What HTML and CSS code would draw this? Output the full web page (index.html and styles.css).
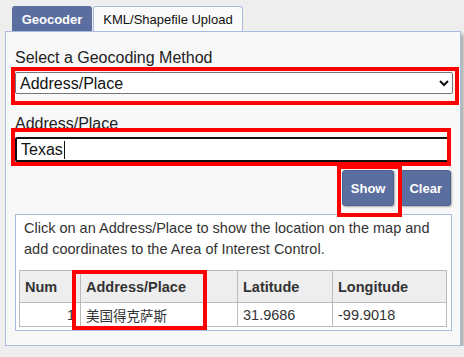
FILE: index.html
```html
<!DOCTYPE html>
<html lang="en">

<head>
    <meta charset="utf-8">
    <title>Geocoder</title>
    <meta name="viewport" content="width=device-width, initial-scale=1">
    <link rel="stylesheet" href="styles.css">
</head>

<body>
    <div class="geocoder">
        <div class="tabs">
            <div class="tab tab-active">Geocoder</div>
            <div class="tab">KML/Shapefile Upload</div>
        </div>

        <div class="panel">
            <label class="field-label" for="method">Select a Geocoding Method</label>
            <select id="method" class="method-select">
                <option>Address/Place</option>
            </select>

            <label class="field-label">Address/Place</label>
            <div class="search-box">Texas<span class="caret"></span></div>

            <div class="actions">
                <button class="btn">Show</button>
                <button class="btn">Clear</button>
            </div>

            <div class="results">
                <p class="hint">Click on an Address/Place to show the location on the map and add coordinates to the Area of Interest Control.</p>
                <table class="result-table">
                    <thead>
                        <tr>
                            <th class="col-num">Num</th>
                            <th class="col-place">Address/Place</th>
                            <th class="col-lat">Latitude</th>
                            <th class="col-lon">Longitude</th>
                        </tr>
                    </thead>
                    <tbody>
                        <tr>
                            <td class="num">1</td>
                            <td class="cjk">美国得克萨斯</td>
                            <td>31.9686</td>
                            <td>-99.9018</td>
                        </tr>
                    </tbody>
                </table>
            </div>

            <!-- annotation boxes -->
            <div class="mark mark-select"></div>
            <div class="mark mark-input"></div>
            <div class="mark mark-show"></div>
            <div class="mark mark-column"></div>
        </div>
    </div>
</body>

</html>
```

FILE: styles.css
```css
body {
    margin: 0;
    background-color: #eeeeee;
    font-family: 'Liberation Sans', Arial, sans-serif;
    color: #222;
}

.geocoder {
    padding: 6px 0 0 5px;
}

.tabs {
    display: flex;
    gap: 1px;
    padding-left: 7px;
}

.tab {
    box-sizing: border-box;
    height: 25px;
    width: 150px;
    display: flex;
    align-items: center;
    justify-content: center;
    font-size: 13px;
    color: #111;
    background-color: #fafafa;
    border: 1px solid #a9bce0;
    border-bottom: none;
    border-radius: 3px 3px 0 0;
}

.tab-active {
    width: 80px;
    background-color: #5a6e9f;
    border-color: #5a6e9f;
    color: #fff;
    font-weight: bold;
}

.panel {
    position: relative;
    width: 437px;
    padding: 17px 8px 14px 9px;
    background-color: #f8f8f8;
    border: 1px solid #a9bce0;
    box-shadow: 3px 3px 3px rgba(0, 0, 0, 0.25);
}

.field-label {
    display: block;
    font-size: 16px;
    line-height: 18px;
    margin-bottom: 5px;
}

.method-select {
    display: block;
    box-sizing: border-box;
    width: 438px;
    height: 22px;
    margin: 0 0 21px 0;
    font-family: 'Liberation Sans', Arial, sans-serif;
    font-size: 16px;
    color: #111;
    background-color: #fff;
    border: 1px solid #767676;
    border-radius: 2px;
}

.search-box {
    box-sizing: border-box;
    width: 434px;
    height: 25px;
    margin-top: -1px;
    padding: 0 4px;
    display: flex;
    align-items: center;
    font-size: 16px;
    color: #111;
    background-color: #fff;
    border: 2px solid #111;
    border-radius: 2px;
}

.caret {
    display: inline-block;
    width: 1px;
    height: 18px;
    margin-left: 1px;
    background-color: #111;
}

.actions {
    display: flex;
    justify-content: flex-end;
    gap: 6px;
    margin: 8px 0;
    padding-right: 1px;
}

.btn {
    box-sizing: border-box;
    height: 36px;
    padding: 0 8px;
    font-family: 'Liberation Sans', Arial, sans-serif;
    font-size: 13px;
    font-weight: bold;
    color: #fff;
    background-color: #5a6e9f;
    border: 1px solid #4d6090;
    border-radius: 3px;
    box-shadow: 1px 1px 2px rgba(0, 0, 0, 0.3);
}

.results {
    padding: 3px;
    background-color: #fff;
    border: 1px solid #a9bce0;
}

.hint {
    margin: 0 0 10px 0;
    padding: 0 4px 0 5px;
    font-size: 14.5px;
    line-height: 21px;
    color: #333;
}

.result-table {
    width: 428px;
    border-collapse: collapse;
    font-size: 14.5px;
    color: #333;
}

.result-table th,
.result-table td {
    border: 1px solid #bbbbbb;
    padding: 0 5px;
    text-align: left;
}

.result-table th {
    height: 31px;
    background-color: #eeeeee;
    font-weight: bold;
}

.result-table td {
    height: 23px;
}

.result-table td.num {
    text-align: right;
}

.result-table td.cjk {
    font-family: 'Noto Sans CJK SC', sans-serif;
    font-size: 13.5px;
}

.col-num {
    width: 50px;
}

.col-place {
    width: 146px;
}

.col-lat {
    width: 84px;
}

.mark {
    position: absolute;
    box-sizing: border-box;
    border: 4px solid #ff0000;
}

.mark-select {
    left: 5px;
    top: 35px;
    width: 448px;
    height: 38px;
}

.mark-input {
    left: 5px;
    top: 96px;
    width: 440px;
    height: 38px;
}

.mark-show {
    left: 331px;
    top: 133px;
    width: 65px;
    height: 52px;
}

.mark-column {
    left: 66px;
    top: 238px;
    width: 135px;
    height: 60px;
}
```
